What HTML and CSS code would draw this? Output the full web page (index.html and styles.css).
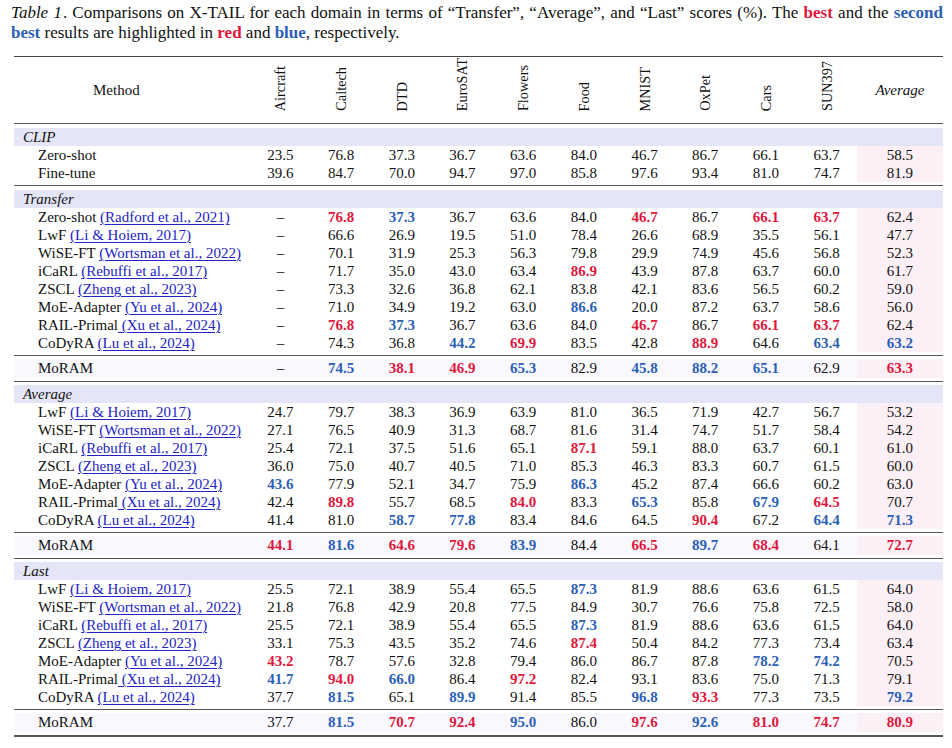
FILE: index.html
```html
<!DOCTYPE html>
<html lang="en">
<head>
<meta charset="utf-8">
<title>Table 1</title>
<link rel="stylesheet" href="styles.css">
</head>
<body>
<div class="page">
<p class="caption"><span class="tlabel">Table 1</span><span>. Comparisons on X-TAIL for each domain in terms of “Transfer”, “Average”, and “Last” scores (%). The </span><b class="r">best</b><span> and the </span><b class="b">second</b> <b class="b">best</b><span> results are highlighted in </span><b class="r">red</b><span> and </span><b class="b">blue</b><span>, respectively.</span></p>

<table class="results">
<colgroup>
<col class="c-method">
<col class="c-num"><col class="c-num"><col class="c-num"><col class="c-num"><col class="c-num">
<col class="c-num"><col class="c-num"><col class="c-num"><col class="c-num"><col class="c-num">
<col class="c-avg">
</colgroup>
<thead>
<tr>
<th class="h-method">Method</th>
<th class="h-rot"><span>Aircraft</span></th>
<th class="h-rot"><span>Caltech</span></th>
<th class="h-rot"><span>DTD</span></th>
<th class="h-rot"><span>EuroSAT</span></th>
<th class="h-rot"><span>Flowers</span></th>
<th class="h-rot"><span>Food</span></th>
<th class="h-rot"><span>MNIST</span></th>
<th class="h-rot"><span>OxPet</span></th>
<th class="h-rot"><span>Cars</span></th>
<th class="h-rot"><span>SUN397</span></th>
<th class="h-avg">Average</th>
</tr>
</thead>

<tbody>
<tr class="sp-top"><td colspan="12"></td></tr>
<tr class="band"><td colspan="12">CLIP</td></tr>
<tr><td class="m">Zero-shot</td><td>23.5</td><td>76.8</td><td>37.3</td><td>36.7</td><td>63.6</td><td>84.0</td><td>46.7</td><td>86.7</td><td>66.1</td><td>63.7</td><td class="avg">58.5</td></tr>
<tr><td class="m">Fine-tune</td><td>39.6</td><td>84.7</td><td>70.0</td><td>94.7</td><td>97.0</td><td>85.8</td><td>97.6</td><td>93.4</td><td>81.0</td><td>74.7</td><td class="avg">81.9</td></tr>
<tr class="sp-bot"><td colspan="12"></td></tr>
</tbody>

<tbody>
<tr class="sp-top"><td colspan="12"></td></tr>
<tr class="band"><td colspan="12">Transfer</td></tr>
<tr><td class="m">Zero-shot <a class="cite">(Radford et al., 2021)</a></td><td>–</td><td class="r">76.8</td><td class="b">37.3</td><td>36.7</td><td>63.6</td><td>84.0</td><td class="r">46.7</td><td>86.7</td><td class="r">66.1</td><td class="r">63.7</td><td class="avg">62.4</td></tr>
<tr><td class="m">LwF <a class="cite">(Li &amp; Hoiem, 2017)</a></td><td>–</td><td>66.6</td><td>26.9</td><td>19.5</td><td>51.0</td><td>78.4</td><td>26.6</td><td>68.9</td><td>35.5</td><td>56.1</td><td class="avg">47.7</td></tr>
<tr><td class="m">WiSE-FT <a class="cite">(Wortsman et al., 2022)</a></td><td>–</td><td>70.1</td><td>31.9</td><td>25.3</td><td>56.3</td><td>79.8</td><td>29.9</td><td>74.9</td><td>45.6</td><td>56.8</td><td class="avg">52.3</td></tr>
<tr><td class="m">iCaRL <a class="cite">(Rebuffi et al., 2017)</a></td><td>–</td><td>71.7</td><td>35.0</td><td>43.0</td><td>63.4</td><td class="r">86.9</td><td>43.9</td><td>87.8</td><td>63.7</td><td>60.0</td><td class="avg">61.7</td></tr>
<tr><td class="m">ZSCL <a class="cite">(Zheng et al., 2023)</a></td><td>–</td><td>73.3</td><td>32.6</td><td>36.8</td><td>62.1</td><td>83.8</td><td>42.1</td><td>83.6</td><td>56.5</td><td>60.2</td><td class="avg">59.0</td></tr>
<tr><td class="m">MoE-Adapter <a class="cite">(Yu et al., 2024)</a></td><td>–</td><td>71.0</td><td>34.9</td><td>19.2</td><td>63.0</td><td class="b">86.6</td><td>20.0</td><td>87.2</td><td>63.7</td><td>58.6</td><td class="avg">56.0</td></tr>
<tr><td class="m">RAIL-Primal<a class="cite"> (Xu et al., 2024)</a></td><td>–</td><td class="r">76.8</td><td class="b">37.3</td><td>36.7</td><td>63.6</td><td>84.0</td><td class="r">46.7</td><td>86.7</td><td class="r">66.1</td><td class="r">63.7</td><td class="avg">62.4</td></tr>
<tr><td class="m">CoDyRA <a class="cite">(Lu et al., 2024)</a></td><td>–</td><td>74.3</td><td>36.8</td><td class="b">44.2</td><td class="r">69.9</td><td>83.5</td><td>42.8</td><td class="r">88.9</td><td>64.6</td><td class="b">63.4</td><td class="avg b">63.2</td></tr>
<tr class="sp-bot"><td colspan="12"></td></tr>
</tbody>

<tbody class="ours">
<tr class="sp-ours"><td colspan="12"></td></tr>
<tr class="row-ours"><td class="m">MoRAM</td><td>–</td><td class="b">74.5</td><td class="r">38.1</td><td class="r">46.9</td><td class="b">65.3</td><td>82.9</td><td class="b">45.8</td><td class="b">88.2</td><td class="b">65.1</td><td>62.9</td><td class="avg r">63.3</td></tr>
<tr class="sp-ours-bot"><td colspan="12"></td></tr>
</tbody>

<tbody>
<tr class="sp-top sp-after"><td colspan="12"></td></tr>
<tr class="band"><td colspan="12">Average</td></tr>
<tr><td class="m">LwF <a class="cite">(Li &amp; Hoiem, 2017)</a></td><td>24.7</td><td>79.7</td><td>38.3</td><td>36.9</td><td>63.9</td><td>81.0</td><td>36.5</td><td>71.9</td><td>42.7</td><td>56.7</td><td class="avg">53.2</td></tr>
<tr><td class="m">WiSE-FT <a class="cite">(Wortsman et al., 2022)</a></td><td>27.1</td><td>76.5</td><td>40.9</td><td>31.3</td><td>68.7</td><td>81.6</td><td>31.4</td><td>74.7</td><td>51.7</td><td>58.4</td><td class="avg">54.2</td></tr>
<tr><td class="m">iCaRL <a class="cite">(Rebuffi et al., 2017)</a></td><td>25.4</td><td>72.1</td><td>37.5</td><td>51.6</td><td>65.1</td><td class="r">87.1</td><td>59.1</td><td>88.0</td><td>63.7</td><td>60.1</td><td class="avg">61.0</td></tr>
<tr><td class="m">ZSCL <a class="cite">(Zheng et al., 2023)</a></td><td>36.0</td><td>75.0</td><td>40.7</td><td>40.5</td><td>71.0</td><td>85.3</td><td>46.3</td><td>83.3</td><td>60.7</td><td>61.5</td><td class="avg">60.0</td></tr>
<tr><td class="m">MoE-Adapter <a class="cite">(Yu et al., 2024)</a></td><td class="b">43.6</td><td>77.9</td><td>52.1</td><td>34.7</td><td>75.9</td><td class="b">86.3</td><td>45.2</td><td>87.4</td><td>66.6</td><td>60.2</td><td class="avg">63.0</td></tr>
<tr><td class="m">RAIL-Primal<a class="cite"> (Xu et al., 2024)</a></td><td>42.4</td><td class="r">89.8</td><td>55.7</td><td>68.5</td><td class="r">84.0</td><td>83.3</td><td class="b">65.3</td><td>85.8</td><td class="b">67.9</td><td class="r">64.5</td><td class="avg">70.7</td></tr>
<tr><td class="m">CoDyRA <a class="cite">(Lu et al., 2024)</a></td><td>41.4</td><td>81.0</td><td class="b">58.7</td><td class="b">77.8</td><td>83.4</td><td>84.6</td><td>64.5</td><td class="r">90.4</td><td>67.2</td><td class="b">64.4</td><td class="avg b">71.3</td></tr>
<tr class="sp-bot"><td colspan="12"></td></tr>
</tbody>

<tbody class="ours">
<tr class="sp-ours"><td colspan="12"></td></tr>
<tr class="row-ours"><td class="m">MoRAM</td><td class="r">44.1</td><td class="b">81.6</td><td class="r">64.6</td><td class="r">79.6</td><td class="b">83.9</td><td>84.4</td><td class="r">66.5</td><td class="b">89.7</td><td class="r">68.4</td><td>64.1</td><td class="avg r">72.7</td></tr>
<tr class="sp-ours-bot"><td colspan="12"></td></tr>
</tbody>

<tbody>
<tr class="sp-top sp-after"><td colspan="12"></td></tr>
<tr class="band"><td colspan="12">Last</td></tr>
<tr><td class="m">LwF <a class="cite">(Li &amp; Hoiem, 2017)</a></td><td>25.5</td><td>72.1</td><td>38.9</td><td>55.4</td><td>65.5</td><td class="b">87.3</td><td>81.9</td><td>88.6</td><td>63.6</td><td>61.5</td><td class="avg">64.0</td></tr>
<tr><td class="m">WiSE-FT <a class="cite">(Wortsman et al., 2022)</a></td><td>21.8</td><td>76.8</td><td>42.9</td><td>20.8</td><td>77.5</td><td>84.9</td><td>30.7</td><td>76.6</td><td>75.8</td><td>72.5</td><td class="avg">58.0</td></tr>
<tr><td class="m">iCaRL <a class="cite">(Rebuffi et al., 2017)</a></td><td>25.5</td><td>72.1</td><td>38.9</td><td>55.4</td><td>65.5</td><td class="b">87.3</td><td>81.9</td><td>88.6</td><td>63.6</td><td>61.5</td><td class="avg">64.0</td></tr>
<tr><td class="m">ZSCL <a class="cite">(Zheng et al., 2023)</a></td><td>33.1</td><td>75.3</td><td>43.5</td><td>35.2</td><td>74.6</td><td class="r">87.4</td><td>50.4</td><td>84.2</td><td>77.3</td><td>73.4</td><td class="avg">63.4</td></tr>
<tr><td class="m">MoE-Adapter <a class="cite">(Yu et al., 2024)</a></td><td class="r">43.2</td><td>78.7</td><td>57.6</td><td>32.8</td><td>79.4</td><td>86.0</td><td>86.7</td><td>87.8</td><td class="b">78.2</td><td class="b">74.2</td><td class="avg">70.5</td></tr>
<tr><td class="m">RAIL-Primal<a class="cite"> (Xu et al., 2024)</a></td><td class="b">41.7</td><td class="r">94.0</td><td class="b">66.0</td><td>86.4</td><td class="r">97.2</td><td>82.4</td><td>93.1</td><td>83.6</td><td>75.0</td><td>71.3</td><td class="avg">79.1</td></tr>
<tr><td class="m">CoDyRA <a class="cite">(Lu et al., 2024)</a></td><td>37.7</td><td class="b">81.5</td><td>65.1</td><td class="b">89.9</td><td>91.4</td><td>85.5</td><td class="b">96.8</td><td class="r">93.3</td><td>77.3</td><td>73.5</td><td class="avg b">79.2</td></tr>
<tr class="sp-bot"><td colspan="12"></td></tr>
</tbody>

<tbody class="ours last">
<tr class="sp-ours"><td colspan="12"></td></tr>
<tr class="row-ours"><td class="m">MoRAM</td><td>37.7</td><td class="b">81.5</td><td class="r">70.7</td><td class="r">92.4</td><td class="b">95.0</td><td>86.0</td><td class="r">97.6</td><td class="b">92.6</td><td class="r">81.0</td><td class="r">74.7</td><td class="avg r">80.9</td></tr>
<tr class="sp-ours-bot"><td colspan="12"></td></tr>
</tbody>
</table>
</div>
</body>
</html>
```

FILE: styles.css
```css
html, body {
  margin: 0;
  padding: 0;
  background: #ffffff;
}

body {
  font-family: "Liberation Serif", "Times New Roman", serif;
  color: #111111;
}

.page {
  width: 932px;
  padding: 3px 10px 0 11px;
}

.caption {
  margin: 0;
  font-size: 17px;
  line-height: 19.5px;
  text-align: justify;
}

.caption .tlabel {
  font-style: italic;
  padding-right: 1px;
}

.caption b {
  font-weight: bold;
}

.r {
  color: #e0173d;
  font-weight: bold;
}

.b {
  color: #2c5fb6;
  font-weight: bold;
}

.results {
  margin: 14px 0 0 3px;
  border-collapse: collapse;
  table-layout: fixed;
  width: 929px;
  font-size: 15px;
  border-bottom: 2px solid #555555;
}

.c-method { width: 236px; }
.c-num { width: 60.7px; }
.c-avg { width: 86px; }

.results thead tr {
  border-top: 1.5px solid #444444;
  border-bottom: 1px solid #555555;
}

.results th {
  box-sizing: border-box;
  height: 67px;
  padding: 0;
  font-weight: normal;
  line-height: 18px;
}

.h-method {
  text-align: left;
  vertical-align: middle;
  padding-left: 79px !important;
}

.h-rot {
  vertical-align: bottom;
  text-align: center;
  padding-bottom: 12px !important;
}

.h-rot span {
  display: block;
  width: 16px;
  margin: 0 auto;
  writing-mode: vertical-rl;
  transform: rotate(180deg);
  font-size: 14.3px;
  line-height: 16px;
  white-space: nowrap;
}

.h-avg {
  font-style: italic;
  text-align: center;
  vertical-align: middle;
}

.results tbody {
  border-top: 1px solid #555555;
}

.results td {
  height: 18px;
  padding: 0;
  line-height: 18px;
  text-align: center;
  white-space: nowrap;
}

.results td.m {
  text-align: left;
  padding-left: 24px;
}

.results td.avg {
  background: #fcf0f6;
}

.band td {
  background: #e4e5f7;
  text-align: left;
  font-style: italic;
  padding-left: 9px;
}

.sp-top td {
  height: 4px;
  line-height: 0;
  font-size: 0;
}

.sp-top.sp-after td {
  height: 3px;
}

.sp-bot td {
  height: 3px;
  line-height: 0;
  font-size: 0;
}

.sp-ours td {
  height: 3px;
  line-height: 0;
  font-size: 0;
}

.sp-ours-bot td {
  height: 3px;
  line-height: 0;
  font-size: 0;
}

.row-ours td {
  background: #f8f8fe;
  height: 19px;
  line-height: 19px;
}

.cite {
  color: #2323c6;
  text-decoration: underline;
  text-decoration-thickness: 1px;
  text-underline-offset: 2px;
}
```
